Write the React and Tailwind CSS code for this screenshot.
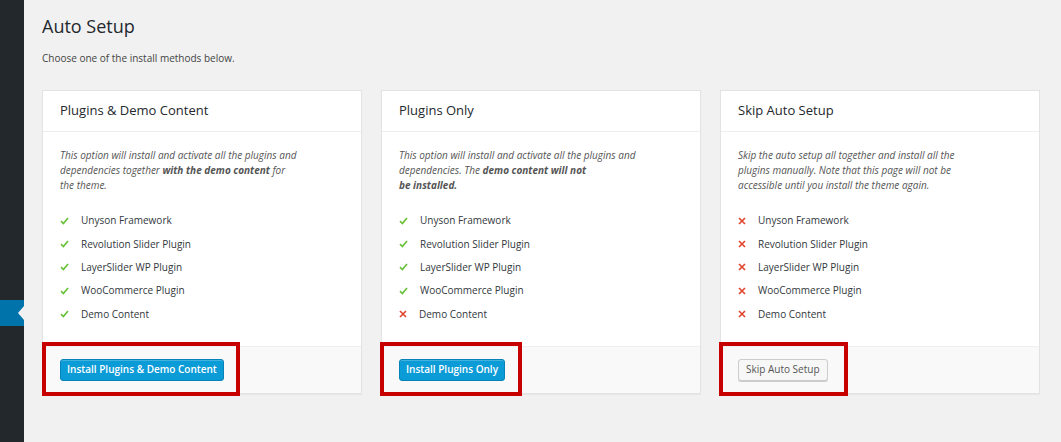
import React from 'react';

const ITEMS = [
  'Unyson Framework',
  'Revolution Slider Plugin',
  'LayerSlider WP Plugin',
  'WooCommerce Plugin',
  'Demo Content',
];

const Check = () => (
  <svg width="9" height="8" viewBox="0 0 9 8" className="shrink-0">
    <path d="M1 4.2 L3.4 6.6 L8 1" fill="none" stroke="#6ac13a" strokeWidth="1.7" />
  </svg>
);

const Cross = () => (
  <svg width="8" height="8" viewBox="0 0 8 8" className="shrink-0">
    <path d="M1 1 L7 7 M7 1 L1 7" fill="none" stroke="#e2472f" strokeWidth="1.7" />
  </svg>
);

const SetupCard = ({ title, description, checks, button, primary, boxWidth, boxLeft }) => (
  <div className="w-[320px] bg-white border border-[#e3e3e3] shadow-[0_1px_1px_rgba(0,0,0,0.04)] flex flex-col">
    <div className="h-[41px] flex items-center px-[17px] border-b border-[#eeeeee]">
      <h2 className="text-[13px] text-[#23282d]">{title}</h2>
    </div>
    <div className="px-[17px] pt-[16px] pb-[20px]">
      <p className="text-[10px] leading-[15px] italic text-[#555]">{description}</p>
      <ul className="mt-[16px]">
        {ITEMS.map((item, i) => (
          <li key={item} className="h-[23.4px] flex items-center gap-[12px] text-[10px] text-[#32373c]">
            {checks[i] ? <Check /> : <Cross />}
            <span>{item}</span>
          </li>
        ))}
      </ul>
    </div>
    <div className="relative bg-[#f9f9f9] border-t border-[#f0f0f0] px-[17px] pt-[12px] pb-[12px]">
      {primary ? (
        <button className="block h-[22px] px-[6px] rounded-[3px] bg-[#0b9bd7] border border-[#0683b8] text-white text-[10px] font-semibold shadow-[inset_0_1px_0_rgba(120,200,230,0.5)]">
          {button}
        </button>
      ) : (
        <button className="block h-[22px] px-[7px] rounded-[3px] bg-[#f7f7f7] border border-[#cccccc] text-[#555] text-[10px] shadow-[0_1px_0_#ccc]">
          {button}
        </button>
      )}
      {/* annotation box */}
      <div
        className={`absolute top-[-5px] h-[54px] border-4 border-[#c70000] ${boxWidth} ${boxLeft}`}
      />
    </div>
  </div>
);

export default function App() {
  return (
    <div className="flex h-[442px] bg-[#f1f1f1] overflow-hidden" style={{ fontFamily: '"Open Sans", sans-serif' }}>
      <div className="w-[24px] shrink-0 bg-[#23282d] pt-[300px]">
        <div className="relative h-[26px] bg-[#0073aa]">
          <div className="absolute right-0 top-[6px] w-0 h-0 border-y-[7px] border-y-transparent border-r-[6px] border-r-[#f1f1f1]" />
        </div>
      </div>
      <div className="pl-[18px] pt-[14px]">
        <h1 className="text-[18px] leading-[24px] text-[#23282d]">Auto Setup</h1>
        <p className="mt-[12px] text-[10px] leading-[16px] text-[#444]">Choose one of the install methods below.</p>
        <div className="mt-[24px] flex gap-[19px]">
          <SetupCard
            title="Plugins & Demo Content"
            description={
              <>
                This option will install and activate all the plugins and
                <br />
                dependencies together <b>with the demo content</b> for
                <br />
                the theme.
              </>
            }
            checks={[true, true, true, true, true]}
            button="Install Plugins & Demo Content"
            primary
            boxWidth="w-[198px]"
            boxLeft="left-[-1px]"
          />
          <SetupCard
            title="Plugins Only"
            description={
              <>
                This option will install and activate all the plugins and
                <br />
                dependencies. The <b>demo content will not</b>
                <br />
                <b>be installed.</b>
              </>
            }
            checks={[true, true, true, true, false]}
            button="Install Plugins Only"
            primary
            boxWidth="w-[142px]"
            boxLeft="left-[-2px]"
          />
          <SetupCard
            title="Skip Auto Setup"
            description={
              <>
                Skip the auto setup all together and install all the
                <br />
                plugins manually. Note that this page will not be
                <br />
                accessible until you install the theme again.
              </>
            }
            checks={[false, false, false, false, false]}
            button="Skip Auto Setup"
            boxWidth="w-[129px]"
            boxLeft="left-[-2px]"
          />
        </div>
      </div>
    </div>
  );
}
